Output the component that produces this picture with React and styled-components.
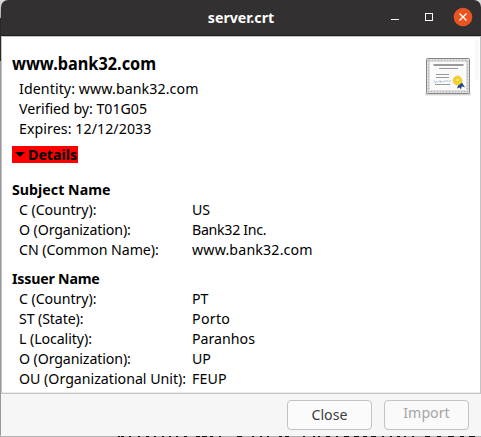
import React from 'react';
import styled, { createGlobalStyle } from 'styled-components';

const GlobalStyle = createGlobalStyle`
  *, *::before, *::after { box-sizing: border-box; }
  html, body { margin: 0; overflow: hidden; background: #fff; }
  body { font-family: 'Noto Sans', sans-serif; font-size: 14.2px; color: #000; }
`;

const Desktop = styled.div`
  width: 481px;
  height: 437px;
  overflow: hidden;
  padding: 0 0 0 1px;
  background: linear-gradient(#dcdcdc 0, #a8a8a8 18px, #2b2829 18px 61px, #989898 61px 435px, #b2b2b2 435px);
`;

const Window = styled.main`
  display: flex;
  flex-direction: column;
  height: 436px;
  overflow: hidden;
  border-radius: 7px 7px 0 0;
  background: #f6f6f6;
`;

const TitleBar = styled.header`
  flex: none;
  display: grid;
  grid-template-columns: 96px 1fr 96px;
  align-items: center;
  height: 36px;
  background: #333031;
  border-bottom: 1px solid #1d1b1c;
  color: #fff;
`;

const WindowTitle = styled.h1`
  grid-column: 2;
  margin: 0;
  text-align: center;
  font-size: 14.2px;
  line-height: 20px;
`;

const WindowControls = styled.svg`
  display: block;
  width: 96px;
  height: 35px;
`;

const Viewport = styled.section`
  flex: none;
  display: flex;
  height: 358px;
  overflow: hidden;
  padding: 0 1px 0 10px;
  background: #fff;
  border: 1px solid #c4c4c4;
  box-shadow: inset 0 -1px 0 #ececec;
`;

const Certificate = styled.article`
  flex: 1;
  padding-top: 15px;
`;

const CertificateIcon = styled.svg`
  flex: none;
  display: block;
  width: 48px;
  height: 48px;
  margin: 15px 5px 0 0;
  overflow: visible;
`;

const ScrollThumb = styled.div`
  flex: none;
  width: 4px;
  height: 40px;
  margin-top: 3px;
  border-radius: 2px;
  background: #f8f8f8;
`;

const Subject = styled.h2`
  width: max-content;
  margin: 0;
  font-size: 18.2px;
  line-height: 23px;
  white-space: nowrap;
  transform: scaleX(0.895);
  transform-origin: left;
`;

const Summary = styled.div`
  padding: 4px 0 0 7px;
`;

const Line = styled.div`
  line-height: 20px;
  white-space: nowrap;
`;

const Text = styled.span`
  white-space: nowrap;
  letter-spacing: ${(p) => p.$track || 0}px;
`;

const DetailsToggle = styled.button`
  display: flex;
  align-items: center;
  gap: 3px;
  width: 66px;
  height: 17px;
  margin: 7px 0 17px;
  padding: 0 0 0 3px;
  border: 0;
  background: #f00;
  color: #000;
  font: bold 14.2px/17px 'Noto Sans', sans-serif;
`;

const Arrow = styled.svg`
  flex: none;
  width: 10px;
  height: 5px;
`;

const Group = styled.section`
  margin-bottom: 9px;
`;

const GroupTitle = styled.h3`
  margin: 0;
  font-size: 14.2px;
  line-height: 20px;
`;

const Field = styled.div`
  display: grid;
  grid-template-columns: 173px 1fr;
  padding-left: 7px;
  line-height: 20px;
`;

const ActionBar = styled.footer`
  flex: 1;
  display: flex;
  justify-content: flex-end;
  gap: 12px;
  padding: 6px 12px 0 0;
  background: #f6f6f6;
`;

const Button = styled.button`
  width: 85px;
  height: 30px;
  padding: 0 0 ${(p) => p.$lift || 0}px;
  border: 1px solid #c3c3c3;
  border-radius: 4px;
  background: #fbfbfb;
  color: #3d3d3d;
  font: 14.2px/20px 'Noto Sans', sans-serif;
  &:disabled { color: #a5a5a5; background: #fafafa; }
`;

const BackgroundEdge = styled.svg`
  display: block;
  width: 480px;
  height: 1px;
`;

const summary = [
  ['Identity: www.bank32.com', 0.09],
  ['Verified by: T01G05', -0.03],
  ['Expires: 12/12/2033', 0.07],
];

const groups = [
  { title: 'Subject Name', track: 0.03, fields: [
    ['C (Country):', -0.07, 'US', 0],
    ['O (Organization):', -0.12, 'Bank32 Inc.', -0.3],
    ['CN (Common Name):', -0.07, 'www.bank32.com', 0.17],
  ] },
  { title: 'Issuer Name', track: -0.2, fields: [
    ['C (Country):', -0.07, 'PT', 0],
    ['ST (State):', -0.12, 'Porto', 0.3],
    ['L (Locality):', -0.08, 'Paranhos', 0],
    ['O (Organization):', -0.12, 'UP', 0],
    ['OU (Organizational Unit):', -0.01, 'FEUP', 0.1],
    ['CN (Common Name):', -0.07, '', 0],
  ] },
];

// x positions and widths of the marks showing under the window edge
const marks = [
  [118, 2], [121, 3], [129, 2], [138, 2], [146, 3], [154, 2], [162, 2], [169, 2], [176, 2], [184, 3],
  [196, 4], [202, 5], [210, 3], [219, 2], [237, 5], [252, 2], [260, 2], [267, 2], [279, 3], [285, 4],
  [303, 2], [313, 2], [318, 2], [326, 4], [336, 2], [344, 5], [354, 5], [363, 4], [371, 5], [382, 2],
  [390, 2], [397, 3], [404, 2], [412, 2], [425, 5], [437, 4], [448, 6], [460, 4], [469, 6],
];

export default function App() {
  return (
    <>
      <GlobalStyle />
      <Desktop>
        <Window>
          <TitleBar>
            <WindowTitle>server.crt</WindowTitle>
            <WindowControls viewBox="385 0 96 35" fill="none">
              <path d="M391 19.500h8" stroke="#fff" />
              <rect x="425.500" y="13.500" width="7" height="7" stroke="#fff" />
              <circle cx="463" cy="17" r="9.300" fill="#e95420" />
              <path d="M459.500 13.500l7 7m0-7l-7 7" stroke="#fff" strokeWidth="1.300" />
            </WindowControls>
          </TitleBar>
          <Viewport>
            <Certificate>
              <Subject>www.bank32.com</Subject>
              <Summary>
                {summary.map(([t, k]) => <Line key={t}><Text $track={k}>{t}</Text></Line>)}
              </Summary>
              <DetailsToggle>
                <Arrow viewBox="0 0 10 5"><path d="M0 0h10L5 5z" /></Arrow>
                <Text>Details</Text>
              </DetailsToggle>
              {groups.map((g) => (
                <Group key={g.title}>
                  <GroupTitle><Text $track={g.track}>{g.title}</Text></GroupTitle>
                  {g.fields.map(([l, lk, v, vk]) => (
                    <Field key={l}><Text $track={lk}>{l}</Text><Text $track={vk}>{v}</Text></Field>
                  ))}
                </Group>
              ))}
            </Certificate>
            <CertificateIcon viewBox="422 52 48 48" fill="none">
              <rect x="425" y="92" width="46" height="3.500" rx="1.500" fill="#000" opacity=".16" />
              <rect x="426.500" y="58.500" width="43" height="35" rx="1" fill="#ececec" stroke="#858585" />
              <rect x="428.500" y="60.500" width="39" height="31" stroke="#bdbdbd" strokeWidth="2" strokeDasharray="2 1" />
              <rect x="430" y="62" width="36" height="28" fill="#fafafa" />
              <path d="M433.500 65h30" stroke="#9a9a9a" strokeWidth="2" />
              <path d="M439 68.500h19M436 74.500h13M436 77.500h13M435 84.500h15" stroke="#989898" />
              <path d="M434 80.500l1 2 2-1 1 1 2-2 1 2 1.500-1.500 1 1 2-1.500 1 1 1.500-1 1 1 2-1" stroke="#8fa9cd" strokeWidth=".7" />
              <path d="M459 83l-2 5.500 2.500-1 1.500 2 .8-3.200 3.200 1.200-3-5z" fill="#204a87" />
              <circle cx="457.500" cy="80.500" r="4.400" fill="#f7d52b" stroke="#eec318" strokeDasharray="1.500 .7" />
              <circle cx="457.500" cy="80" r="2" fill="#fbe678" stroke="#dfb812" strokeWidth=".6" />
            </CertificateIcon>
            <ScrollThumb />
          </Viewport>
          <ActionBar>
            <Button>Close</Button>
            <Button disabled $lift={5}>Import</Button>
          </ActionBar>
        </Window>
        <BackgroundEdge viewBox="1 0 480 1">
          {marks.map(([x, w]) => <rect key={x} x={x} width={w} height="1" fill="#111" />)}
        </BackgroundEdge>
      </Desktop>
    </>
  );
}
